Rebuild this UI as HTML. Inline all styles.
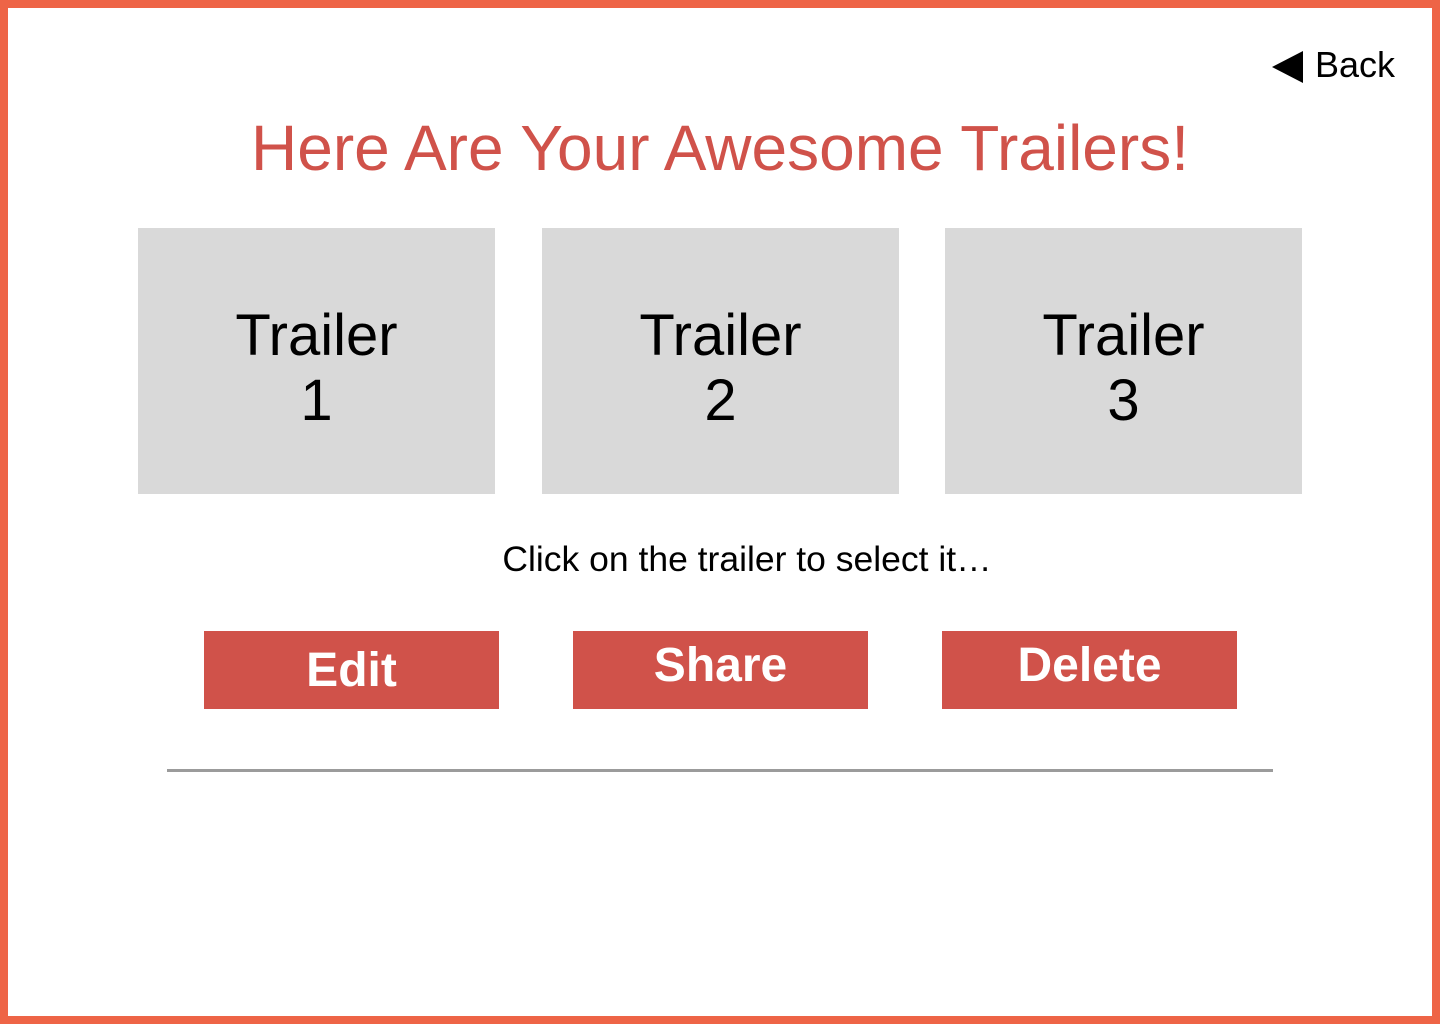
<!DOCTYPE html>
<html><head><meta charset="utf-8"><style>
*{margin:0;padding:0;box-sizing:border-box}
body{width:1440px;height:1024px;position:relative;background:#fff;font-family:"Liberation Sans",Arial,sans-serif;overflow:hidden}
.frame{position:absolute;left:0;top:0;width:1440px;height:1024px;border:8px solid #ee6446}
.abs{position:absolute}
.box{position:absolute;top:228px;width:357px;height:266px;background:#d9d9d9;text-align:center;font-size:58px;line-height:65px;color:#000}
.btn{position:absolute;top:631px;width:295px;height:78px;background:#d0524a;color:#fff;font-weight:bold;font-size:48px;text-align:center}
</style></head><body>
<div class="frame"></div>
<svg class="abs" style="left:1272px;top:51px" width="32" height="32"><polygon points="0,16 31,0 31,32" fill="#000"/></svg>
<div class="abs" style="left:1315px;top:44px;font-size:36px;line-height:42px;color:#000">Back</div>
<div class="abs" style="left:0;width:1440px;top:112px;text-align:center;font-size:64px;line-height:72px;color:#d0524a">Here Are Your Awesome Trailers!</div>
<div class="box" style="left:138px;padding-top:75px">Trailer<br>1</div>
<div class="box" style="left:542px;padding-top:75px">Trailer<br>2</div>
<div class="box" style="left:945px;padding-top:75px">Trailer<br>3</div>
<div class="abs" style="left:0;width:1494px;top:539px;text-align:center;font-size:35.5px;line-height:40px;color:#000">Click on the trailer to select it…</div>
<div class="btn" style="left:204px;line-height:80px">Edit</div>
<div class="btn" style="left:573px;line-height:70px">Share</div>
<div class="btn" style="left:942px;line-height:70px">Delete</div>
<div class="abs" style="left:167px;top:769px;width:1106px;height:3px;background:#9b9b9b"></div>
</body></html>
